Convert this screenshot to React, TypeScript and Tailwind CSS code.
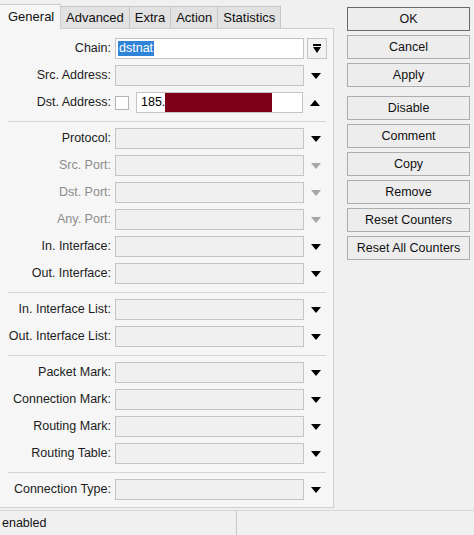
import React from 'react';

type Row = {
  label: string;
  kind?: 'chain' | 'dst' | 'plain';
  disabled?: boolean;
  sepBefore?: boolean;
};

const rows: Row[] = [
  { label: 'Chain:', kind: 'chain' },
  { label: 'Src. Address:' },
  { label: 'Dst. Address:', kind: 'dst' },
  { label: 'Protocol:', sepBefore: true },
  { label: 'Src. Port:', disabled: true },
  { label: 'Dst. Port:', disabled: true },
  { label: 'Any. Port:', disabled: true },
  { label: 'In. Interface:' },
  { label: 'Out. Interface:' },
  { label: 'In. Interface List:', sepBefore: true },
  { label: 'Out. Interface List:' },
  { label: 'Packet Mark:', sepBefore: true },
  { label: 'Connection Mark:' },
  { label: 'Routing Mark:' },
  { label: 'Routing Table:' },
  { label: 'Connection Type:', sepBefore: true },
];

const tabs = ['General', 'Advanced', 'Extra', 'Action', 'Statistics'];

const buttons = [
  { label: 'OK', gapAfter: false, main: true },
  { label: 'Cancel' },
  { label: 'Apply', gapAfter: true },
  { label: 'Disable' },
  { label: 'Comment' },
  { label: 'Copy' },
  { label: 'Remove' },
  { label: 'Reset Counters' },
  { label: 'Reset All Counters' },
];

const Triangle = ({ up = false, color = '#000' }: { up?: boolean; color?: string }) => (
  <svg width="10" height="6" viewBox="0 0 10 6">
    <polygon points={up ? '0,6 10,6 5,0' : '0,0 10,0 5,6'} fill={color} />
  </svg>
);

const FieldRow = ({ row }: { row: Row }) => {
  const labelColor = row.disabled ? 'text-[#8c8c8c]' : 'text-[#1c1c1c]';
  return (
    <div className="flex items-center h-[21px] mb-[6px] shrink-0">
      <div className={`w-[112px] pr-[1px] text-right whitespace-nowrap ${labelColor}`}>{row.label}</div>
      <div className="w-[3px]" />
      {row.kind === 'chain' && (
        <>
          <div className="w-[189px] h-[21px] bg-white border border-[#c4c4c4] flex items-center px-[2px]">
            <span className="bg-[#2f84d8] text-white leading-[15px] px-[1px]">dstnat</span>
          </div>
          <div className="ml-[3px] w-[20px] h-[21px] border border-[#c4c4c4] bg-[#f2f2f2] flex flex-col items-center justify-center gap-[1px]">
            <div className="w-[8px] h-[1.5px] bg-black" />
            <svg width="8" height="6" viewBox="0 0 8 6">
              <polygon points="0,0 8,0 4,6" fill="#000" />
            </svg>
          </div>
        </>
      )}
      {row.kind === 'dst' && (
        <>
          <div className="w-[14px] h-[14px] bg-white border border-[#b4b4b4] mt-[1px]" />
          <div className="ml-[7px] w-[167px] h-[21px] bg-white border border-[#c4c4c4] flex items-center pl-[4px]">
            <span>185.</span>
            <div className="w-[107px] h-[19px] bg-[#7e0018]" />
          </div>
          <div className="w-[23px] flex justify-center">
            <Triangle up />
          </div>
        </>
      )}
      {(row.kind === undefined || row.kind === 'plain') && (
        <>
          <div className="w-[189px] h-[21px] bg-[#f0f0f0] border border-[#c4c4c4]" />
          <div className="w-[23px] flex justify-center">
            <Triangle color={row.disabled ? '#a6a6a6' : '#000'} />
          </div>
        </>
      )}
    </div>
  );
};

export default function App() {
  return (
    <div
      className="w-[474px] h-[535px] bg-[#f0f0f0] flex flex-col text-[12.5px] overflow-hidden"
      style={{ fontFamily: '"Liberation Sans", Arial, sans-serif' }}
    >
      <div className="flex flex-1 min-h-0">
        {/* left side: tabs + form */}
        <div className="w-[334px] flex flex-col">
          <div className="flex items-end h-[28px] shrink-0 pt-[3px] text-[13px]">
            {tabs.map((t, i) =>
              i === 0 ? (
                <div
                  key={t}
                  className="h-[25px] w-[61px] pl-[8px] flex items-center bg-[#f6f6f6] border-r border-t border-[#cfcfcf] text-[#111] relative top-[1px]"
                >
                  {t}
                </div>
              ) : (
                <div
                  key={t}
                  className="h-[22px] px-[5px] flex items-center bg-[#e2e2e2] border-r border-t border-[#c6c6c6] text-[#111]"
                >
                  {t}
                </div>
              )
            )}
          </div>
          <div className="flex-1 flex flex-col bg-[#f6f6f6] border-r border-b border-t border-[#d0d0d0] pt-[9px] pb-[1px]">
            {rows.map((r) => (
              <React.Fragment key={r.label}>
                {r.sepBefore && <div className="ml-[8px] mr-[7px] h-px shrink-0 bg-[#d4d4d4] mt-[2px] mb-[6px]" />}
                <FieldRow row={r} />
              </React.Fragment>
            ))}
          </div>
        </div>

        {/* right side: buttons */}
        <div className="flex-1 pl-[13px] pr-[4px] pt-[7px] flex flex-col">
          {buttons.map((b) => (
            <div
              key={b.label}
              className={`h-[24px] flex items-center justify-center bg-[#ededed] border text-[#111] whitespace-nowrap ${
                b.main ? 'border-[#6a6a6a]' : 'border-[#adadad]'
              } ${b.gapAfter ? 'mb-[9px]' : 'mb-[4px]'}`}
            >
              {b.label}
            </div>
          ))}
        </div>
      </div>

      {/* status bar */}
      <div className="h-[25px] shrink-0 mt-[2px] border-t border-[#d6d6d6] flex items-center bg-[#f0f0f0]">
        <div className="w-[237px] h-full flex items-center pl-[2px] border-r border-[#c8c8c8] text-[#111]">enabled</div>
        <div className="flex-1" />
      </div>
    </div>
  );
}
